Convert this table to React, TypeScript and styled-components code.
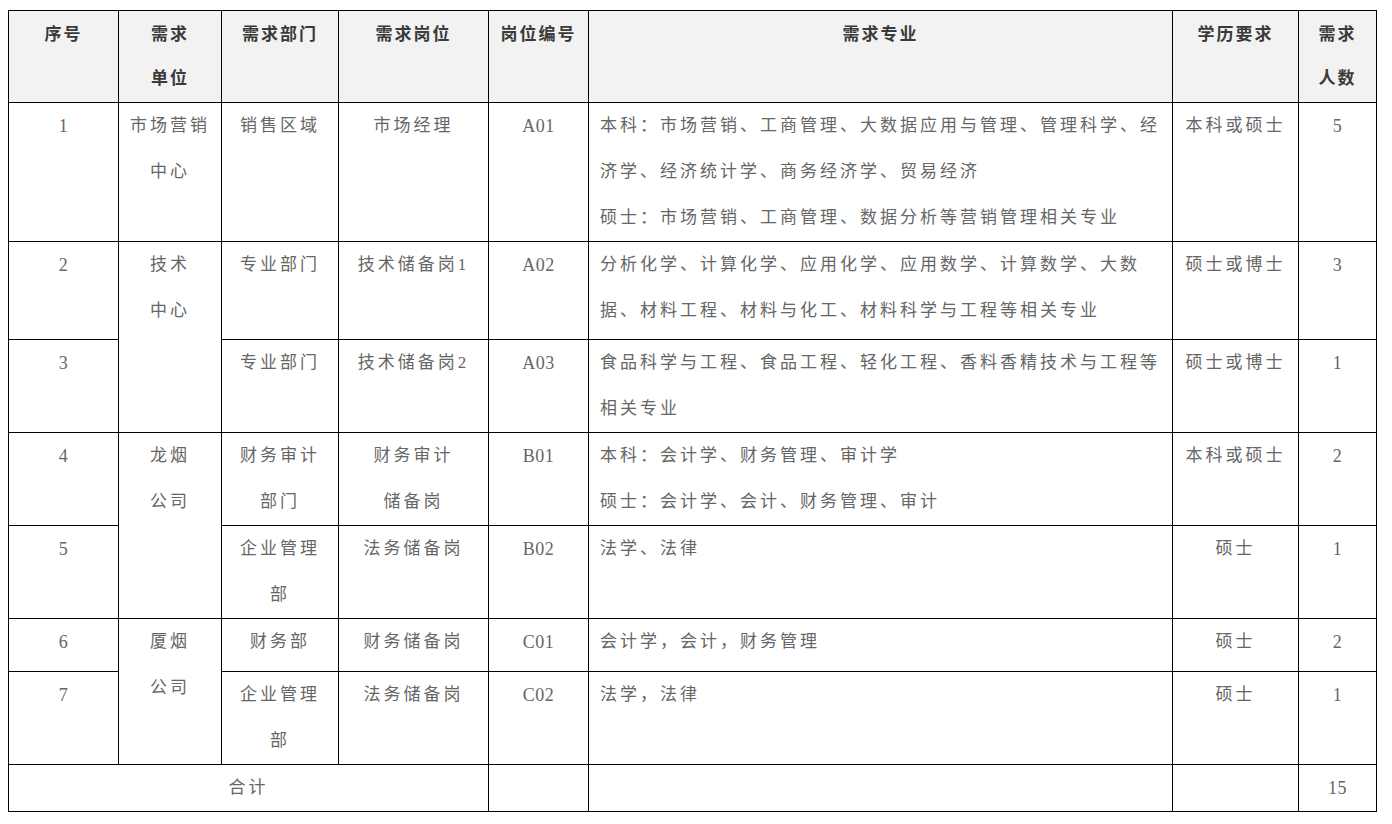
import React from 'react';
import styled, { createGlobalStyle } from 'styled-components';

const GlobalStyle = createGlobalStyle`
  html, body {
    margin: 0;
    padding: 0;
    background: #ffffff;
  }
`;

const Page = styled.div`
  padding: 10px 0 0 8px;
  font-family: 'Liberation Serif', 'Noto Sans CJK SC', serif;
`;

const Table = styled.table`
  width: 1368px;
  table-layout: fixed;
  border-collapse: collapse;
  font-size: 17px;
  color: #666666;
`;

const HeadRow = styled.tr`
  height: 92px;
  background: #f2f2f2;
`;

const HeadCell = styled.th`
  border: 1px solid #000000;
  padding: 0;
  vertical-align: top;
  text-align: center;
  line-height: 44px;
  font-family: 'Noto Sans CJK SC', sans-serif;
  font-weight: 700;
  color: #3a3a3a;
  letter-spacing: 2px;
  white-space: nowrap;
`;

const Row = styled.tr<{ $h: number }>`
  height: ${(p) => p.$h}px;
`;

const Cell = styled.td<{ $left?: boolean; $code?: boolean }>`
  border: 1px solid #000000;
  padding: ${(p) => (p.$left ? '0 0 0 11px' : '0')};
  vertical-align: top;
  text-align: ${(p) => (p.$left ? 'left' : 'center')};
  line-height: 46px;
  font-size: ${(p) => (p.$code ? '18px' : '17px')};
  letter-spacing: ${(p) => (p.$code ? '0.5px' : '3px')};
  white-space: nowrap;
  overflow: hidden;
`;

const widths = [110, 103, 117, 150, 100, 584, 126, 78];

const heads: string[][] = [
  ['序号'],
  ['需求', '单位'],
  ['需求部门'],
  ['需求岗位'],
  ['岗位编号'],
  ['需求专业'],
  ['学历要求'],
  ['需求', '人数'],
];

interface Job {
  no: string;
  unit?: { lines: string[]; span: number };
  dept: string[];
  post: string[];
  code: string;
  major: string[];
  degree: string;
  count: string;
  h: number;
}

const jobs: Job[] = [
  {
    no: '1',
    unit: { lines: ['市场营销', '中心'], span: 1 },
    dept: ['销售区域'],
    post: ['市场经理'],
    code: 'A01',
    major: [
      '本科：市场营销、工商管理、大数据应用与管理、管理科学、经',
      '济学、经济统计学、商务经济学、贸易经济',
      '硕士：市场营销、工商管理、数据分析等营销管理相关专业',
    ],
    degree: '本科或硕士',
    count: '5',
    h: 138,
  },
  {
    no: '2',
    unit: { lines: ['技术', '中心'], span: 2 },
    dept: ['专业部门'],
    post: ['技术储备岗1'],
    code: 'A02',
    major: [
      '分析化学、计算化学、应用化学、应用数学、计算数学、大数',
      '据、材料工程、材料与化工、材料科学与工程等相关专业',
    ],
    degree: '硕士或博士',
    count: '3',
    h: 98,
  },
  {
    no: '3',
    dept: ['专业部门'],
    post: ['技术储备岗2'],
    code: 'A03',
    major: ['食品科学与工程、食品工程、轻化工程、香料香精技术与工程等', '相关专业'],
    degree: '硕士或博士',
    count: '1',
    h: 93,
  },
  {
    no: '4',
    unit: { lines: ['龙烟', '公司'], span: 2 },
    dept: ['财务审计', '部门'],
    post: ['财务审计', '储备岗'],
    code: 'B01',
    major: ['本科：会计学、财务管理、审计学', '硕士：会计学、会计、财务管理、审计'],
    degree: '本科或硕士',
    count: '2',
    h: 93,
  },
  {
    no: '5',
    dept: ['企业管理', '部'],
    post: ['法务储备岗'],
    code: 'B02',
    major: ['法学、法律'],
    degree: '硕士',
    count: '1',
    h: 93,
  },
  {
    no: '6',
    unit: { lines: ['厦烟', '公司'], span: 2 },
    dept: ['财务部'],
    post: ['财务储备岗'],
    code: 'C01',
    major: ['会计学，会计，财务管理'],
    degree: '硕士',
    count: '2',
    h: 53,
  },
  {
    no: '7',
    dept: ['企业管理', '部'],
    post: ['法务储备岗'],
    code: 'C02',
    major: ['法学，法律'],
    degree: '硕士',
    count: '1',
    h: 93,
  },
];

const Lines = ({ lines }: { lines: string[] }) => (
  <>
    {lines.map((line, i) => (
      <React.Fragment key={i}>
        {i > 0 && <br />}
        {line}
      </React.Fragment>
    ))}
  </>
);

const App = () => {
  return (
    <Page>
      <GlobalStyle />
      <Table>
        <colgroup>
          {widths.map((w, i) => (
            <col key={i} style={{ width: w }} />
          ))}
        </colgroup>
        <thead>
          <HeadRow>
            {heads.map((h, i) => (
              <HeadCell key={i}>
                <Lines lines={h} />
              </HeadCell>
            ))}
          </HeadRow>
        </thead>
        <tbody>
          {jobs.map((job) => (
            <Row key={job.no} $h={job.h}>
              <Cell $code>{job.no}</Cell>
              {job.unit && (
                <Cell rowSpan={job.unit.span}>
                  <Lines lines={job.unit.lines} />
                </Cell>
              )}
              <Cell>
                <Lines lines={job.dept} />
              </Cell>
              <Cell>
                <Lines lines={job.post} />
              </Cell>
              <Cell $code>{job.code}</Cell>
              <Cell $left>
                <Lines lines={job.major} />
              </Cell>
              <Cell>{job.degree}</Cell>
              <Cell $code>{job.count}</Cell>
            </Row>
          ))}
          <Row $h={47}>
            <Cell colSpan={4}>合计</Cell>
            <Cell />
            <Cell />
            <Cell />
            <Cell $code>15</Cell>
          </Row>
        </tbody>
      </Table>
    </Page>
  );
};

export default App;
